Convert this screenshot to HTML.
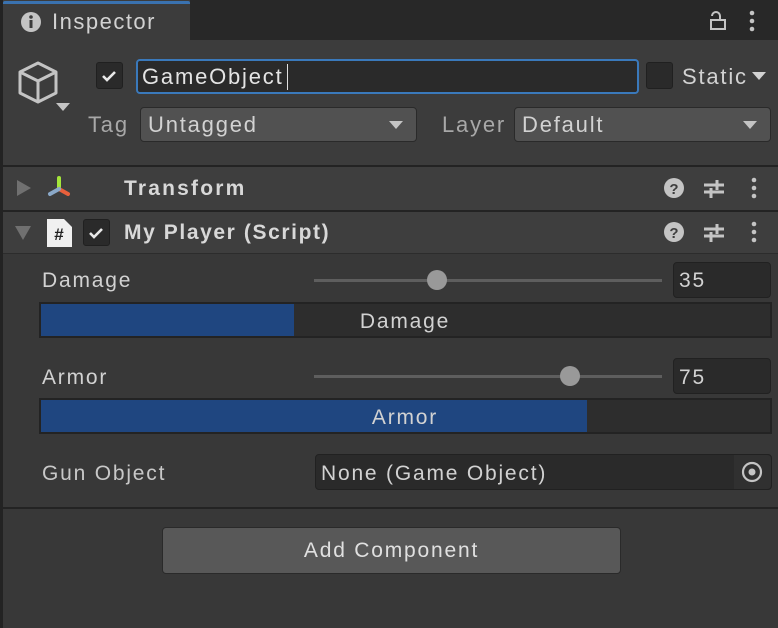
<!DOCTYPE html>
<html><head><meta charset="utf-8"><style>
*{box-sizing:border-box;margin:0;padding:0}
body{width:778px;height:628px;background:#383838;font-family:"Liberation Sans",sans-serif;color:#d2d2d2;position:relative;overflow:hidden;font-size:21px}
.a{position:absolute}
.t{position:absolute;white-space:nowrap;line-height:1;letter-spacing:1.8px}
.dd{position:absolute;background:#515151;border:1px solid #2a2a2a;border-radius:4px}
.tri{position:absolute;width:0;height:0;border-left:7px solid transparent;border-right:7px solid transparent;border-top:8px solid #c4c4c4}
.cb{position:absolute;width:27px;height:27px;background:#2a2a2a;border:1px solid #202020;border-radius:3px}
.fld{position:absolute;background:#2a2a2a;border:1px solid #212121;border-radius:4px}
</style></head><body>
<div class="a" style="left:0;top:0;width:778px;height:40px;background:#282828"></div>
<div class="a" style="left:3px;top:0;width:187px;height:40px;background:#3c3c3c"></div>
<div class="a" style="left:3px;top:1px;width:187px;height:3px;background:#3a72b0;border-radius:2px 2px 0 0"></div>
<div class="a" style="left:0;top:0;width:3px;height:628px;background:#232323"></div>
<svg class="a" style="left:21px;top:12px" width="20" height="20" viewBox="0 0 20 20"><circle cx="10" cy="10" r="10" fill="#c4c4c4"/><rect x="8.5" y="8" width="3" height="8" fill="#3c3c3c"/><circle cx="10" cy="5" r="1.8" fill="#3c3c3c"/></svg>
<div class="t" style="left:52px;top:11px;font-size:22px;color:#d2d2d2;letter-spacing:1.5px">Inspector</div>
<svg class="a" style="left:709px;top:10px" width="18" height="20" viewBox="0 0 18 20"><rect x="2" y="10" width="14" height="9" fill="none" stroke="#c4c4c4" stroke-width="2"/><path d="M11 10V6a4 4 0 0 0-8 0" fill="none" stroke="#c4c4c4" stroke-width="2"/></svg>
<svg class="a" style="left:747px;top:10px" width="10" height="22"><circle cx="5" cy="3" r="2.3" fill="#c4c4c4"/><circle cx="5" cy="11" r="2.3" fill="#c4c4c4"/><circle cx="5" cy="19" r="2.3" fill="#c4c4c4"/></svg>
<div class="a" style="left:3px;top:40px;width:775px;height:126px;background:#3c3c3c"></div>
<svg class="a" style="left:16px;top:60px" width="44" height="46" viewBox="0 0 44 46"><path d="M22 3L40 12V33L22 42L4 33V12Z M4 12L22 21L40 12 M22 21V42" fill="none" stroke="#c4c4c4" stroke-width="3" stroke-linejoin="round"/></svg>
<div class="tri" style="left:56px;top:103px"></div>
<div class="cb" style="left:96px;top:62px"></div>
<svg class="a" style="left:99px;top:66px" width="20" height="20"><path d="M4 10l4 4 8-8" fill="none" stroke="#e8e8e8" stroke-width="2.6"/></svg>
<div class="a" style="left:136px;top:59px;width:503px;height:35px;background:#2a2a2a;border:2px solid #3a79bb;border-radius:4px"></div>
<div class="t" style="left:142px;top:66px;font-size:22px;color:#e4e4e4">GameObject</div>
<div class="a" style="left:287px;top:64px;width:1px;height:26px;background:#e0e0e0"></div>
<div class="cb" style="left:646px;top:62px"></div>
<div class="t" style="left:682px;top:66px;font-size:22px">Static</div>
<div class="tri" style="left:752px;top:72px;border-top-color:#d2d2d2"></div>
<div class="t" style="left:88px;top:114px;color:#a8a8a8;font-size:22px">Tag</div>
<div class="dd" style="left:140px;top:107px;width:277px;height:35px"></div>
<div class="t" style="left:148px;top:114px;font-size:22px">Untagged</div>
<div class="tri" style="left:389px;top:121px"></div>
<div class="t" style="left:442px;top:114px;color:#a8a8a8;font-size:22px">Layer</div>
<div class="dd" style="left:514px;top:107px;width:257px;height:35px"></div>
<div class="t" style="left:522px;top:114px;font-size:22px">Default</div>
<div class="tri" style="left:743px;top:121px"></div>
<div class="a" style="left:3px;top:165px;width:775px;height:2px;background:#232323"></div>
<div class="a" style="left:3px;top:167px;width:775px;height:43px;background:#3e3e3e"></div>
<div class="a" style="left:17px;top:180px;width:0;height:0;border-top:8px solid transparent;border-bottom:8px solid transparent;border-left:14px solid #707070"></div>
<svg class="a" style="left:44px;top:175px" width="30" height="26" viewBox="0 0 30 26"><path d="M15 14V3" stroke="#a4e63a" stroke-width="4" stroke-linecap="round"/><path d="M15 14l9 5" stroke="#e8603c" stroke-width="4" stroke-linecap="round"/><path d="M15 14l-9 5" stroke="#8aa8c8" stroke-width="4" stroke-linecap="round"/></svg>
<div class="t" style="left:124px;top:178px;font-weight:bold;font-size:21px;color:#d8d8d8;letter-spacing:2.2px">Transform</div>
<svg class="a" style="left:663px;top:177px" width="22" height="22"><circle cx="11" cy="11" r="10" fill="#c4c4c4"/><text x="11" y="17" text-anchor="middle" font-family="Liberation Sans" font-weight="bold" font-size="15" fill="#3e3e3e">?</text></svg>
<svg class="a" style="left:703px;top:177px" width="22" height="22"><path d="M1 8h20M1 15h20M14 3v10M8 11v10" stroke="#c4c4c4" stroke-width="3"/></svg>
<svg class="a" style="left:749px;top:177px" width="10" height="22"><circle cx="5" cy="3" r="2.3" fill="#c4c4c4"/><circle cx="5" cy="11" r="2.3" fill="#c4c4c4"/><circle cx="5" cy="19" r="2.3" fill="#c4c4c4"/></svg>
<div class="a" style="left:3px;top:210px;width:775px;height:2px;background:#232323"></div>
<div class="a" style="left:3px;top:212px;width:775px;height:41px;background:#3e3e3e"></div>
<div class="a" style="left:15px;top:226px;width:0;height:0;border-left:8px solid transparent;border-right:8px solid transparent;border-top:14px solid #707070"></div>
<svg class="a" style="left:47px;top:219px" width="25" height="28" viewBox="0 0 25 28"><path d="M0 0H17L25 8V28H0Z" fill="#f0f0f0"/><text x="12" y="21" text-anchor="middle" font-family="Liberation Sans" font-weight="bold" font-size="17" fill="#222">#</text></svg>
<div class="cb" style="left:83px;top:219px"></div>
<svg class="a" style="left:86px;top:223px" width="20" height="20"><path d="M4 10l4 4 8-8" fill="none" stroke="#e8e8e8" stroke-width="2.6"/></svg>
<div class="t" style="left:124px;top:222px;font-weight:bold;font-size:21px;color:#d8d8d8;letter-spacing:1.6px">My Player (Script)</div>
<svg class="a" style="left:663px;top:221px" width="22" height="22"><circle cx="11" cy="11" r="10" fill="#c4c4c4"/><text x="11" y="17" text-anchor="middle" font-family="Liberation Sans" font-weight="bold" font-size="15" fill="#3e3e3e">?</text></svg>
<svg class="a" style="left:703px;top:221px" width="22" height="22"><path d="M1 8h20M1 15h20M14 3v10M8 11v10" stroke="#c4c4c4" stroke-width="3"/></svg>
<svg class="a" style="left:749px;top:221px" width="10" height="22"><circle cx="5" cy="3" r="2.3" fill="#c4c4c4"/><circle cx="5" cy="11" r="2.3" fill="#c4c4c4"/><circle cx="5" cy="19" r="2.3" fill="#c4c4c4"/></svg>
<div class="a" style="left:3px;top:253px;width:775px;height:1px;background:#2c2c2c"></div>
<div class="t" style="left:42px;top:270px">Damage</div>
<div class="a" style="left:314px;top:279px;width:348px;height:3px;background:#5e5e5e"></div>
<div class="a" style="left:427px;top:270px;width:20px;height:20px;border-radius:50%;background:#999"></div>
<div class="fld" style="left:673px;top:262px;width:98px;height:36px"></div>
<div class="t" style="left:679px;top:270px">35</div>
<div class="a" style="left:39px;top:302px;width:733px;height:36px;background:#2d2d2d;border:2px solid #232323"></div>
<div class="a" style="left:41px;top:304px;width:253px;height:32px;background:#1f4680"></div>
<div class="t" style="left:0;width:810px;text-align:center;top:311px">Damage</div>
<div class="t" style="left:42px;top:367px">Armor</div>
<div class="a" style="left:314px;top:375px;width:348px;height:3px;background:#5e5e5e"></div>
<div class="a" style="left:560px;top:366px;width:20px;height:20px;border-radius:50%;background:#999"></div>
<div class="fld" style="left:673px;top:358px;width:98px;height:36px"></div>
<div class="t" style="left:679px;top:367px">75</div>
<div class="a" style="left:39px;top:398px;width:733px;height:36px;background:#2d2d2d;border:2px solid #232323"></div>
<div class="a" style="left:41px;top:400px;width:546px;height:32px;background:#1f4680"></div>
<div class="t" style="left:0;width:810px;text-align:center;top:407px">Armor</div>
<div class="t" style="left:42px;top:463px;color:#c8c8c8">Gun Object</div>
<div class="fld" style="left:315px;top:454px;width:457px;height:36px"></div>
<div class="a" style="left:734px;top:455px;width:37px;height:34px;background:#303030;border-radius:0 4px 4px 0"></div>
<div class="t" style="left:321px;top:463px">None (Game Object)</div>
<svg class="a" style="left:741px;top:461px" width="22" height="22"><circle cx="11" cy="11" r="9" fill="none" stroke="#c4c4c4" stroke-width="2.2"/><circle cx="11" cy="11" r="3.5" fill="#c4c4c4"/></svg>
<div class="a" style="left:3px;top:507px;width:775px;height:2px;background:#232323"></div>
<div class="a" style="left:162px;top:527px;width:459px;height:47px;background:#585858;border:1px solid #2a2a2a;border-radius:4px"></div>
<div class="t" style="left:162px;width:459px;text-align:center;top:540px;color:#e0e0e0">Add Component</div>
</body></html>
